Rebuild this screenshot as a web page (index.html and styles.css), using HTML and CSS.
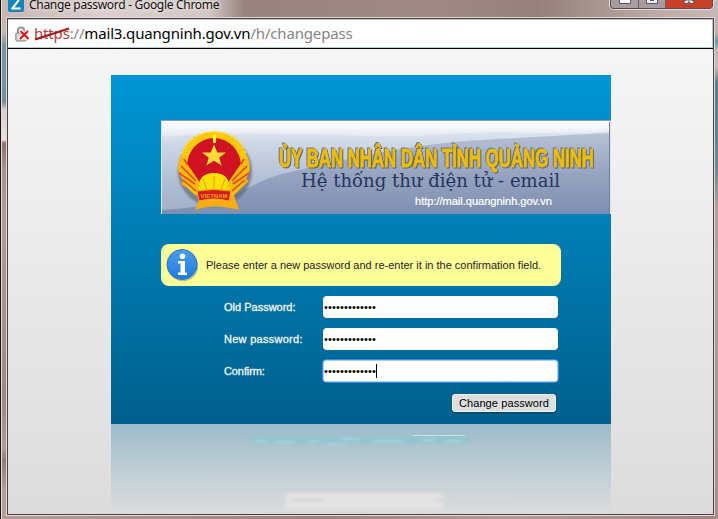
FILE: index.html
```html
<!DOCTYPE html>
<html lang="vi">
<head>
<meta charset="utf-8">
<title>Change password</title>
<link rel="stylesheet" href="styles.css">
</head>
<body>
<div class="frame">
  <header class="titlebar">
    <svg class="favicon" width="16" height="12" viewBox="0 0 16 12"><path d="M0 0H16V10Q16 12 14 12H2Q0 12 0 10Z" fill="#1684bb"/><path d="M4 0H12L6.5 7.5H12.5V9.4H3.3V8L9.5 0" fill="#fff"/></svg>
    <span class="title">Change password - Google Chrome</span>
    <div class="controls">
      <span class="control"><svg width="12" height="4"><path d="M.5 0V3.5H11.5V0" fill="#fff" stroke="#55566b"/></svg></span>
      <span class="control"><svg width="12" height="4"><path d="M.5 0V3.5H11.5V0" fill="#eee" stroke="#55566b"/><path d="M4 0H8V1H4Z" fill="#55566b"/></svg></span>
      <span class="control close"><svg width="12" height="4"><path d="M2.5 0L.5 3.5H4.5L6 1.5L7.5 3.5H11.5L9.5 0Z" fill="#eee" stroke="#55566b"/></svg></span>
    </div>
  </header>
  <div class="window">
    <div class="address">
      <svg class="lock" width="15" height="17" viewBox="0 0 15 17"><path d="M3 8V4.5Q3 1.5 6 1.5T9 4.5V8" fill="none" stroke="#929292" stroke-width="2"/><rect x=".8" y="7" width="10.5" height="8" rx="1" fill="#c9c9c9" stroke="#888"/><path d="M2 9H10M2 11H10M2 13H10" stroke="#eee"/><path d="M5.5 5L13.5 13M13 5L5 13" stroke="#fff" stroke-width="4"/><path d="M5.5 5L13.5 13M13 5L5 13" stroke="#d9171b" stroke-width="2.2"/></svg>
      <span class="url"><span class="scheme">https<svg class="strike" width="36" height="14"><path d="M1 12.5L35 1.5" stroke="#a51419" stroke-width="2"/></svg></span><span class="muted">://</span>mail3.quangninh.gov.vn<span class="muted">/h/changepass</span></span>
    </div>
    <main class="page">
      <section class="panel">
        <svg class="banner" width="450" height="94" viewBox="0 0 450 94">
          <defs>
            <linearGradient id="sky" x2="0" y2="1"><stop offset="0" stop-color="#e9eff6"/><stop offset=".3" stop-color="#cbd4e3"/><stop offset=".65" stop-color="#b1bed3"/><stop offset="1" stop-color="#a1afc8"/></linearGradient>
            <linearGradient id="wave" x2="0" y2="1"><stop offset="0" stop-color="#b7c1d5"/><stop offset=".5" stop-color="#96a4c0"/><stop offset="1" stop-color="#7f8fb1"/></linearGradient>
            <linearGradient id="shine" x2="0" y2="1"><stop offset="0" stop-color="#fff" stop-opacity=".9"/><stop offset="1" stop-color="#fff" stop-opacity=".2"/></linearGradient>
            <filter id="soft" x="-20%" y="-20%" width="140%" height="140%"><feGaussianBlur stdDeviation="1"/></filter>
          </defs>
          <rect width="450" height="94" fill="url(#sky)"/>
          <path d="M0 94V90C80 86 77 65 125 53C190 38 250 24 320 20C370 17 410 15 450 13V94Z" fill="url(#wave)"/>
          <path d="M0 1H450V11C400 17 340 8 260 16C190 18 100 9 0 17Z" fill="url(#shine)"/>
          <path d="M.5 94V.5H449.5V94" fill="none" stroke="#dce5f0"/><path d="M0 .5H450" stroke="#8f9bb7"/><path d="M448.5 2V94" stroke="#727fa4"/>
          <ellipse cx="54" cy="51" rx="37" ry="36" fill="#535b67" opacity=".6" filter="url(#soft)"/>
          <path d="M20 64L40 76L34 90Q53 83 78 90L73 75L88 61L80 55H26Z" fill="#f4ad12"/>
          <ellipse cx="53" cy="46" rx="34" ry="34.5" fill="#fbc80c"/>
          <ellipse cx="53" cy="46" rx="27" ry="28" fill="#d01323"/>
          <path d="M20 35Q12 54 27 64L36 75L40 64ZM86 35Q94 54 79 64L70 75L66 64Z" fill="#f8b80c"/>
          <path d="M20 46L35 61M18 53L34 64M22 60L35 71M86 46L71 61M88 53L72 64M84 60L71 71M23 39L26 44M83 39L80 44" stroke="#e04b1c" stroke-width="1.6"/>
          <path d="M53 24.5L56.3 32.5H65L58.2 37.7L60.7 45.5L53 40.8L45.3 45.5L47.8 37.7L41 32.5H49.7Z" fill="#ffd83a"/>
          <path d="M38 71Q36 53 53 53T68 71Z" fill="#ffe10a"/>
          <path d="M53 70V56M46 70L42 59M60 70L64 59M40 68L38 65M66 68L68 65" stroke="#f19a0d"/>
          <path d="M36 71Q53 68 70 71L68 81Q53 77 38 81Z" fill="#d51e1c" stroke="#f8a614"/>
          <text x="53" y="78" class="emblem-text" text-anchor="middle">VIETNAM</text>
          <path d="M21 34Q28 12 53 12T85 34" fill="none" stroke="#ffdf28" stroke-width="1.5" stroke-dasharray="3 2"/>
          <path d="M52 15H55V23H52Z" fill="#fff02a"/>
          <text x="118" y="47" class="heading" textLength="315" lengthAdjust="spacingAndGlyphs">ỦY BAN NHÂN DÂN TỈNH QUẢNG NINH</text>
          <text x="140" y="67" class="subheading" textLength="259" lengthAdjust="spacingAndGlyphs">Hệ thống thư điện tử - email</text>
          <text x="254" y="85" class="site" textLength="137" lengthAdjust="spacingAndGlyphs">http://mail.quangninh.gov.vn</text>
        </svg>
        <div class="notice">
          <svg class="info" width="34" height="34" viewBox="0 0 34 34"><defs><linearGradient id="blue" x2="0" y2="1"><stop stop-color="#4b9eea"/><stop offset="1" stop-color="#1e7ae0"/></linearGradient></defs><circle cx="17" cy="18" r="15.3" fill="#6c7564" opacity=".45"/><circle cx="16" cy="16.5" r="15" fill="url(#blue)" stroke="#2773cb"/><circle cx="16.5" cy="8.3" r="2.8" fill="#fff"/><path d="M12 13H19V24.5H21V27H12V24.5H14.5V15.5H12Z" fill="#fff"/></svg>
          <span>Please enter a new password and re-enter it in the confirmation field.</span>
        </div>
        <form class="form">
          <label class="old">Old Password:</label><div class="field"><span class="dots">•••••••••••••</span></div>
          <label class="new">New password:</label><div class="field"><span class="dots">•••••••••••••</span></div>
          <label class="confirm">Confirm:</label><div class="field focused"><span class="dots">•••••••••••••</span><i class="caret"></i></div>
        </form>
        <button class="submit" type="button">Change password</button>
      </section>
      <div class="reflection">
        <svg width="500" height="90" viewBox="0 0 500 90">
          <defs><filter id="smear" x="-10%" y="-100%" width="120%" height="300%"><feGaussianBlur stdDeviation="2 1"/></filter></defs>
          <g filter="url(#smear)"><rect x="140" y="13" width="218" height="6" fill="#8ac6cf" opacity=".8"/><path d="M143 17H156M164 18H184M198 17H208M216 20H235M228 15H249M263 17H292M311 16H324M335 17H352" stroke="#a6d5da" stroke-width="2"/><rect x="174" y="69" width="158" height="16" fill="#e4e3e4" opacity=".9"/><path d="M180 76H212M324 76H332" stroke="#dad9d9" stroke-width="4"/></g>
          <path d="M98 50.5H400" stroke="#d0cdd2"/><path d="M302 11.5H354" stroke="#c3e3e5"/><path d="M347 72.5H400" stroke="#d0dcdf"/>
        </svg>
      </div>
    </main>
  </div>
</div>
</body>
</html>
```
FILE: styles.css
```css
* { box-sizing: border-box; }
body { margin: 0; overflow: hidden; font-family: "Liberation Sans", Arial, sans-serif; }
svg { display: block; flex: none; }
.frame {
  width: 718px; height: 519px; padding: 0 4px 4px 7px;
  background:
    linear-gradient(#161616, #161616) 0 0 / 1px 100% no-repeat,
    linear-gradient(#e8dcda, #e8dcda) 1px 0 / 1px 100% no-repeat,
    linear-gradient(#c7b6b3 0 14px, #7496a6 27px 67px, #718e9e 84px, #dcd0cc 92px, #e9e0df 122px, #8f706b 125px, #ab928d 152px, #b39a95 202px, #a18782 382px, #b39a95 430px, #927a77 442px, #b59c97 472px) 0 18px / 7px 100% no-repeat,
    linear-gradient(#c0b0ad 0 15px, #5f9aab 24px, #c6b8b5 32px 50px, #547f8e 65px, #668998 150px, #b5a19c 190px, #a58b87) 714px 18px / 4px 100% no-repeat,
    linear-gradient(90deg, #c6b7b4, #dacfcd 14%, #d3c8c6 29%, #98837e 34%, #a18a85 60%, #96807b 75%, #c0b0ad 94%, #c7b8b5) 0 0 / 100% 18px no-repeat,
    linear-gradient(90deg, #b39b96, #9d827e 45%, #b39a95 70%, #a3837e);
}
.titlebar { display: flex; align-items: flex-start; height: 18px; padding-left: 1px; border-bottom: 1px solid #dfd5d3; }
.title { margin: -4px 0 0 5px; font: 12px/17px "Noto Sans", sans-serif; letter-spacing: -.3px; white-space: nowrap; color: #111; text-shadow: 0 0 5px #fff; }
.controls { display: flex; height: 9px; margin: 0 1px 0 auto; border: 1px solid #554b53; border-top: 0; border-radius: 0 0 4px 4px; box-shadow: 0 0 0 1px #e3dad9; background: #a89c9e; }
.control { display: flex; justify-content: center; width: 28px; border-right: 1px solid #655b62; }
.control + .control { width: 27px; }
.control.close { width: 46px; border-right: 0; background: #c84127; border-radius: 0 0 3px 0; }
.window { height: 497px; border: 1px solid #4b4341; box-shadow: 0 0 0 1px #e3d8d6; }
.address { display: flex; height: 30px; padding: 7px 0 0 7px; background: #fff; border-top: 1px solid #bbc3c7; border-bottom: 1px solid #000; box-shadow: inset -1px -1px #bac9cd; }
.lock { margin-top: -1px; }
.url { margin: -5px 0 0 4px; font: 15px/22px "Noto Sans", sans-serif; letter-spacing: -.17px; color: #000; white-space: nowrap; }
.scheme { position: relative; color: #b33b43; }
.strike { position: absolute; left: 0; top: 4px; }
.muted { color: #858585; }
.page { height: 465px; padding-top: 26px; background: linear-gradient(#f6f6f6, #dcdcdc); }
.panel { width: 500px; height: 349px; margin-left: 103px; padding: 45px 0 0 50px; background: linear-gradient(#0096d5, #005f8c); }
.notice { display: flex; align-items: center; width: 400px; height: 42px; margin-top: 30px; padding-left: 5px; gap: 6px; border-radius: 8px; background: #ffff99; color: #222; font-size: 11px; white-space: nowrap; }
.info { margin-top: -1px; }
.form { display: grid; grid-template-columns: 99px 235px; grid-auto-rows: 22px; row-gap: 10px; align-items: center; margin: 10px 0 0 63px; color: #f5f8fa; font-size: 11px; }
.form label { white-space: nowrap; -webkit-text-stroke: .3px #f5f8fa; }
.form .new { letter-spacing: .27px; }
.form .confirm { letter-spacing: -.1px; }
.field { display: flex; align-items: center; height: 22px; padding-left: 1px; border-radius: 4px; background: #fff; }
.focused { box-shadow: 0 0 0 1px #3d87dc, inset 0 0 0 1px #a7ceff; }
.dots { color: #000; font-size: 11px; letter-spacing: .15px; line-height: 20px; }
.caret { width: 1px; height: 14px; background: #000; }
.submit { display: block; width: 104px; height: 18px; margin: 12px 0 0 291px; padding: 0; border: 1px solid #f6f6f6; border-radius: 3px; background: #dedede; box-shadow: 0 1px 2px #003d5a; font: 11px/15px "Liberation Sans", Arial, sans-serif; letter-spacing: .1px; color: #000; }
.reflection { width: 500px; height: 90px; margin-left: 103px; background: linear-gradient(#9dbbc8, #c5d1d7 62%, #dcdcdc); }
.heading { font: 700 25px "Liberation Sans", Arial, sans-serif; fill: #edbd0a; stroke: #edbd0a; stroke-width: .9px; filter: drop-shadow(1px 1px 0 #5d6475) drop-shadow(-1px -1px .3px #6c7488); }
.subheading { font: 18px "DejaVu Serif", serif; fill: #26355e; }
.site { font: 10px "Liberation Sans", Arial, sans-serif; fill: #fff; stroke: #fff; stroke-width: .2px; }
.emblem-text { font: 700 6px "Liberation Sans", sans-serif; fill: #f99b1c; }
```
